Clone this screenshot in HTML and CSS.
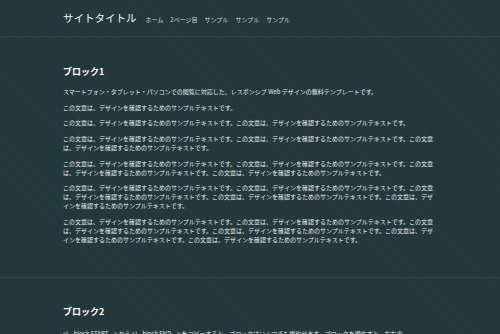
FILE: index.html
```html
<!DOCTYPE html>
<html lang="ja">
<head>
  <meta charset="UTF-8" />
  <meta name="viewport" content="width=device-width, initial-scale=1.0" />
  <title>サイトタイトル</title>
  <link rel="stylesheet" href="styles.css">
</head>
<body>
  <header class="header">
    <div class="inner header-inner">
      <h1 class="site-title">サイトタイトル</h1>
      <nav class="nav">
        <a href="#">ホーム</a>
        <a href="#">2ページ目</a>
        <a href="#">サンプル</a>
        <a href="#">サンプル</a>
        <a href="#">サンプル</a>
      </nav>
    </div>
  </header>

  <main class="main">
    <!-- block START -->
    <section class="block block-first">
      <div class="inner">
        <h2>ブロック1</h2>
        <p>スマートフォン・タブレット・パソコンでの閲覧に対応した、レスポンシブ Web デザインの無料テンプレートです。</p>
        <p>この文章は、デザインを確認するためのサンプルテキストです。</p>
        <p>この文章は、デザインを確認するためのサンプルテキストです。この文章は、デザインを確認するためのサンプルテキストです。</p>
        <p>この文章は、デザインを確認するためのサンプルテキストです。この文章は、デザインを確認するためのサンプルテキストです。この文章は、デザインを確認するためのサンプルテキストです。</p>
        <p>この文章は、デザインを確認するためのサンプルテキストです。この文章は、デザインを確認するためのサンプルテキストです。この文章は、デザインを確認するためのサンプルテキストです。この文章は、デザインを確認するためのサンプルテキストです。</p>
        <p>この文章は、デザインを確認するためのサンプルテキストです。この文章は、デザインを確認するためのサンプルテキストです。この文章は、デザインを確認するためのサンプルテキストです。この文章は、デザインを確認するためのサンプルテキストです。この文章は、デザインを確認するためのサンプルテキストです。</p>
        <p>この文章は、デザインを確認するためのサンプルテキストです。この文章は、デザインを確認するためのサンプルテキストです。この文章は、デザインを確認するためのサンプルテキストです。この文章は、デザインを確認するためのサンプルテキストです。この文章は、デザインを確認するためのサンプルテキストです。この文章は、デザインを確認するためのサンプルテキストです。</p>
      </div>
    </section>
    <!-- block END -->

    <section class="block">
      <div class="inner">
        <h2>ブロック2</h2>
        <p>&lt;!-- block START --&gt; から &lt;!-- block END --&gt; をコピーすると、ブロックはいくつでも増やせます。ブロックを増やすと、左右の</p>
      </div>
    </section>
  </main>
</body>
</html>
```

FILE: styles.css
```css
html, body {
  margin: 0;
  padding: 0;
}
body {
  font-family: "Noto Sans CJK JP", "Noto Sans", sans-serif;
  color: #e8ebec;
  background-color: #22373c;
  background-image: repeating-linear-gradient(45deg, rgba(255,255,255,0.015) 0, rgba(255,255,255,0.015) 1px, transparent 1px, transparent 2px);
}
.inner {
  width: 374px;
  margin-left: 63px;
}
.header {
  height: 36px;
  border-bottom: 1px solid #30464b;
}
.header-inner {
  display: flex;
  align-items: center;
  height: 36px;
  width: 420px;
}
.site-title {
  margin: 0 9px 0 0;
  font-size: 10.5px;
  font-weight: normal;
  color: #f2f4f4;
  line-height: 1;
}
.nav {
  display: flex;
  gap: 7px;
  padding-top: 3px;
}
.nav a {
  color: #d3d9da;
  text-decoration: none;
  font-size: 6px;
  line-height: 1;
}
.block {
  padding: 29px 0 26px;
  border-bottom: 1px solid #30464b;
}
.block + .block {
  border-bottom: none;
  padding-top: 28px;
}
h2 {
  margin: 0 0 9px;
  font-size: 9px;
  line-height: 12px;
  color: #ffffff;
}
p {
  margin: 0 0 6.7px;
  font-size: 6px;
  line-height: 9px;
}
.block + .block p {
  margin-top: 11px;
}
```
